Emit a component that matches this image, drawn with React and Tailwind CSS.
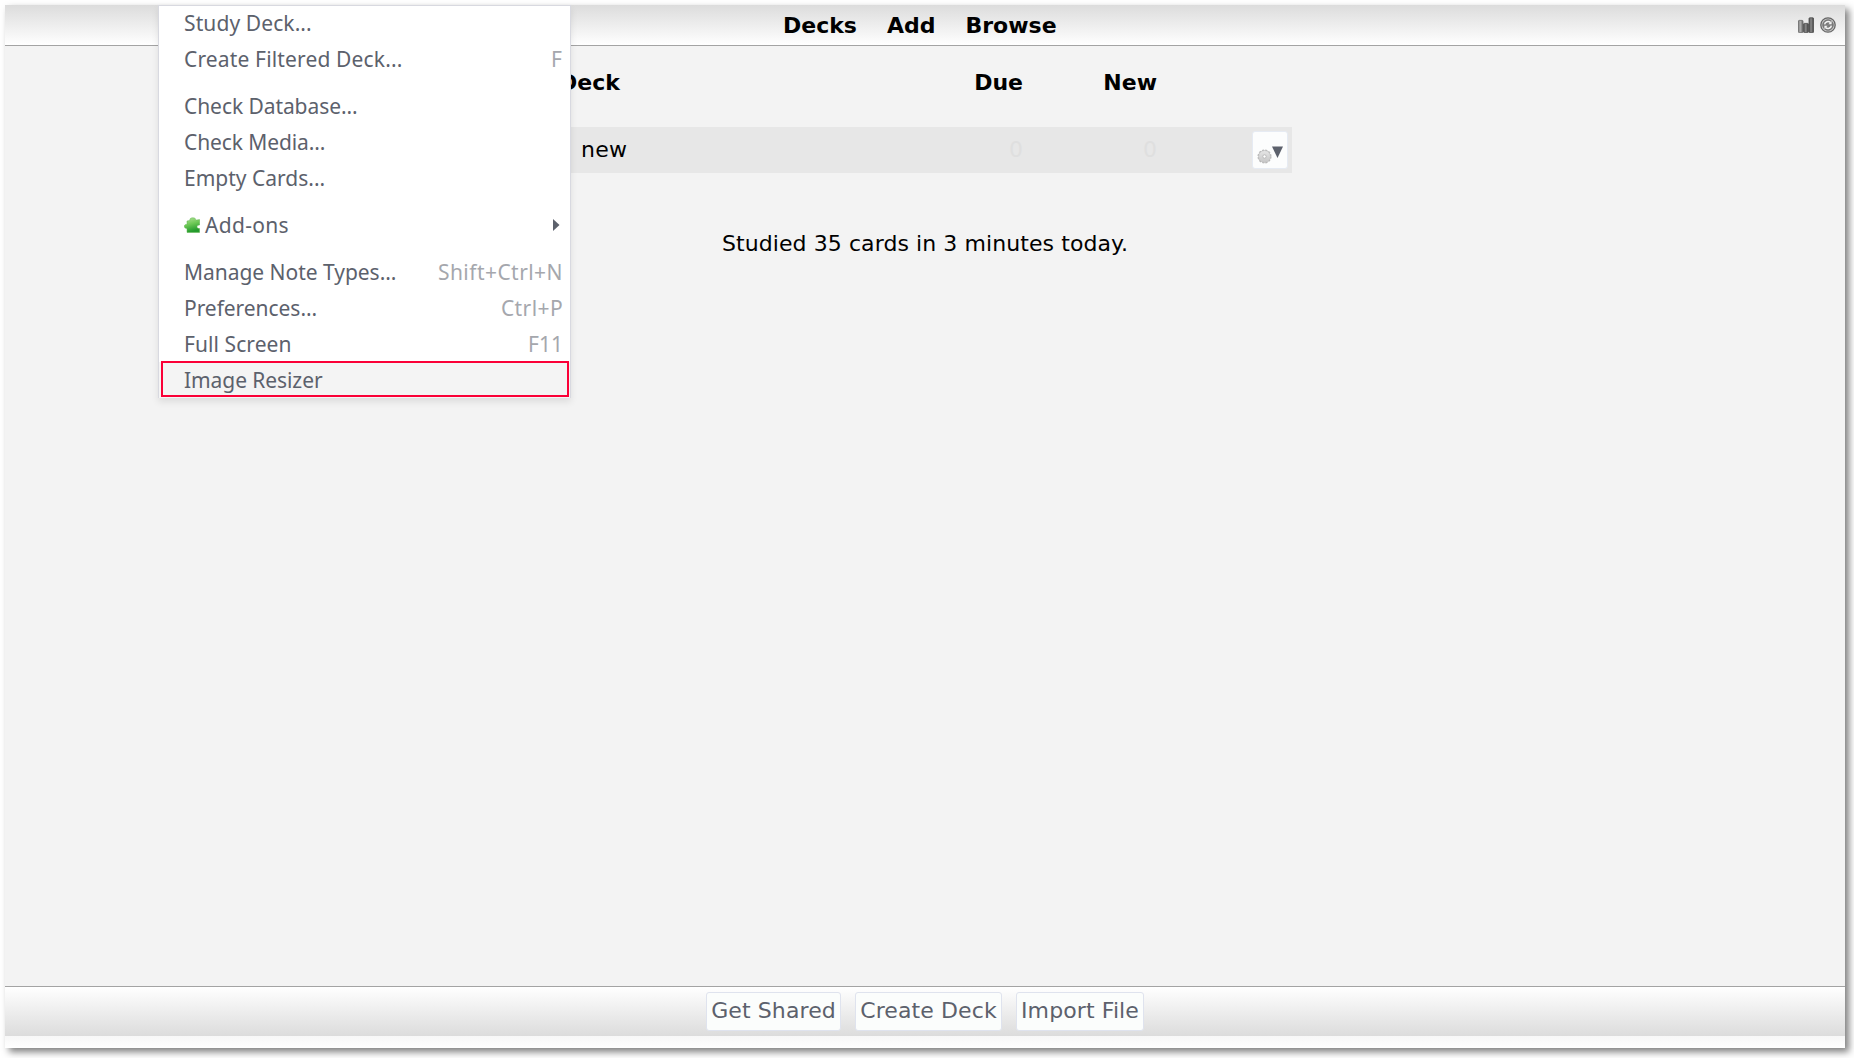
function StatsIcon() {
  return (
    <svg width="16" height="16" viewBox="0 0 16 16" className="block">
      <defs>
        <linearGradient id="bar" x1="0" x2="1" y1="0" y2="0">
          <stop offset="0" stopColor="#777" />
          <stop offset="0.4" stopColor="#b2b2b2" />
          <stop offset="1" stopColor="#686868" />
        </linearGradient>
        <linearGradient id="barDark" x1="0" x2="1" y1="0" y2="0">
          <stop offset="0" stopColor="#4d4d4d" />
          <stop offset="0.45" stopColor="#8a8a8a" />
          <stop offset="1" stopColor="#3c3c3c" />
        </linearGradient>
      </defs>
      <rect x="0.4" y="3.4" width="4.6" height="12.2" rx="0.8" fill="url(#bar)" stroke="#666" strokeWidth="0.8" />
      <rect x="5.6" y="6.4" width="4.8" height="9.2" rx="0.8" fill="url(#barDark)" stroke="#4a4a4a" strokeWidth="0.8" />
      <rect x="11" y="0.8" width="4.6" height="14.8" rx="0.8" fill="url(#barDark)" stroke="#4a4a4a" strokeWidth="0.8" />
    </svg>
  );
}

function SyncIcon() {
  return (
    <svg width="16" height="16" viewBox="0 0 16 16" className="block">
      <circle cx="8" cy="8" r="7.2" fill="#c9c9c9" stroke="#666" strokeWidth="1.3" />
      <circle cx="8" cy="8" r="5.3" fill="#7c7c7c" stroke="#6e6e6e" strokeWidth="0.8" />
      <path d="M4.6 7.4 A3.5 3.5 0 0 1 10.4 5.4 M11.4 8.6 A3.5 3.5 0 0 1 5.6 10.6" fill="none" stroke="#f4f4f4" strokeWidth="1.5" />
      <path d="M11.6 3.9 V7.2 H8.4 Z M4.4 12.1 V8.8 H7.6 Z" fill="#f4f4f4" />
    </svg>
  );
}

function GearIcon() {
  return (
    <svg width="15" height="15" viewBox="0 0 15 15" className="block">
      <defs>
        <linearGradient id="gear" x1="0" x2="0" y1="0" y2="1">
          <stop offset="0" stopColor="#e6e6e6" />
          <stop offset="1" stopColor="#c6c6c6" />
        </linearGradient>
      </defs>
      <circle cx="7.5" cy="7.5" r="6.3" fill="none" stroke="#b5b5b5" strokeWidth="1.4" strokeDasharray="2.1 1.2" />
      <circle cx="7.5" cy="7.5" r="6" fill="url(#gear)" stroke="#bdbdbd" strokeWidth="0.7" />
      <circle cx="7.5" cy="7.5" r="1.7" fill="#fff" stroke="#b0b0b0" strokeWidth="0.8" />
    </svg>
  );
}

function PuzzleIcon() {
  return (
    <svg width="16" height="16" viewBox="0 0 16 16" className="block">
      <defs>
        <linearGradient id="puzzle" x1="0" x2="0.3" y1="0" y2="1">
          <stop offset="0" stopColor="#b4e39a" />
          <stop offset="0.5" stopColor="#6fc957" />
          <stop offset="1" stopColor="#229a2c" />
        </linearGradient>
      </defs>
      <path
        d="M3 4 L6 3.4 C5.4 1.8 6.7 0.8 8.8 0.8 C10.9 0.8 12.2 1.8 11.4 3.2 L15.6 2.6 V8 C14.2 7.8 13 8.6 13 9.8 C13 11 14.2 11.7 15.6 11.5 V15.4 H3 V11.4 C1.4 11.5 0.2 10.6 0.2 9.3 C0.2 8 1.6 7.1 3 7.5 Z"
        fill="url(#puzzle)"
        stroke="#5fb44c"
        strokeWidth="0.5"
      />
    </svg>
  );
}

const groups = [
  [
    { label: "Study Deck...", cls: "tracking-[0.1px]" },
    { label: "Create Filtered Deck...", cls: "tracking-[0.15px]", keys: "F", keyCls: "mr-px" },
  ],
  [
    { label: "Check Database...", cls: "tracking-[-0.07px]" },
    { label: "Check Media...", cls: "tracking-[-0.1px]" },
    { label: "Empty Cards...", cls: "" },
  ],
  [{ label: "Add-ons", cls: "tracking-[0.3px]", submenu: true }],
  [
    { label: "Manage Note Types...", cls: "tracking-[-0.03px]", keys: "Shift+Ctrl+N", keyCls: "tracking-[0.45px]" },
    { label: "Preferences...", cls: "tracking-[-0.05px]", keys: "Ctrl+P", keyCls: "tracking-[0.4px]" },
    { label: "Full Screen", cls: "tracking-[0.08px]", keys: "F11", keyCls: "" },
    { label: "Image Resizer", cls: "tracking-[-0.08px]", active: true },
  ],
];

function MenuItem({ item }) {
  return (
    <div className={"flex h-9 items-center pr-[7px] pl-[25px] " + (item.active ? "relative bg-[#f4f4f4]" : "")}>
      {item.submenu && (
        <span className="mr-[5px]">
          <PuzzleIcon />
        </span>
      )}
      <span className={item.cls}>{item.label}</span>
      {item.keys && <span className={"ml-auto text-[#a5a7ad] " + item.keyCls}>{item.keys}</span>}
      {item.submenu && (
        <svg width="7" height="12" viewBox="0 0 7 12" className="mr-[3px] ml-auto block">
          <path d="M0 0 L6.5 6 L0 12 Z" fill="#5c616c" />
        </svg>
      )}
      {item.active && <div className="absolute -top-px right-px bottom-px left-[2px] border-2 border-[#fb0037]" />}
    </div>
  );
}

function ToolsMenu() {
  return (
    <div className="absolute top-0 left-[153px] h-[393px] w-[413px] border border-[#d8d9e0] bg-white font-['Noto_Sans',sans-serif] text-[21px] leading-9 whitespace-nowrap text-[#5c616c] shadow-[0_4px_7px_rgba(0,0,0,0.09)]">
      <div className="-mt-px flex flex-col gap-[11px]">
        {groups.map((group, i) => (
          <div key={i}>
            {group.map((item) => (
              <MenuItem key={item.label} item={item} />
            ))}
          </div>
        ))}
      </div>
    </div>
  );
}

function BottomButton({ children, width }) {
  return (
    <button className={"h-[39px] rounded-[3px] border border-[#dfe3ee] bg-[#fbfdfc] leading-[36px] pb-px tracking-[0.1px] text-[#5c616c] " + width}>
      {children}
    </button>
  );
}

export default function App() {
  return (
    <div className="h-[1058px] w-[1854px] overflow-hidden bg-white pt-[5px] pl-[5px] font-['DejaVu_Sans',sans-serif] text-[22px] leading-10 text-black">
      <div className="relative flex h-[1043px] w-[1840px] flex-col bg-[#f3f3f3] shadow-[4px_4px_7px_rgba(0,0,0,0.5)]">
        <header className="flex h-[41px] shrink-0 items-center border-b border-[#a3a3a3] bg-linear-to-b from-[#dcdcdc] to-white pr-[9px] pl-[778px] font-bold">
          <nav className="flex gap-[30px] pt-[2px]">
            <span>Decks</span>
            <span>Add</span>
            <span>Browse</span>
          </nav>
          <div className="ml-auto flex gap-[6px]">
            <StatsIcon />
            <SyncIcon />
          </div>
        </header>

        <main className="flex flex-1 flex-col items-center">
          <div className="w-[734px]">
            <div className="grid h-[81px] grid-cols-[465px_134px_135px] pt-[17px] font-bold">
              <div className="flex justify-between pl-px">
                <span>Deck</span>
                <span>Due</span>
              </div>
              <span className="text-right">New</span>
            </div>
            <div className="grid h-[46px] grid-cols-[465px_134px_135px] items-center bg-[#e7e7e7]">
              <div className="flex justify-between pl-[23px]">
                <span className="tracking-[0.2px]">new</span>
                <span className="text-[#dfdfdf]">0</span>
              </div>
              <span className="text-right text-[#dfdfdf]">0</span>
              <button className="mr-[4px] mb-px flex h-[38px] w-[36px] items-start justify-self-end rounded-[3px] border border-[#e6ebf3] bg-[#fcfdfd] pt-[14px] pl-[4px]">
                <span className="mt-[3px]">
                  <GearIcon />
                </span>
                <svg width="11" height="12" viewBox="0 0 11 12" className="block">
                  <path d="M0 0.5 H11 L5.5 12 Z" fill="#5c616c" />
                </svg>
              </button>
            </div>
          </div>
          <p className="mt-[51px] tracking-[0.08px]">Studied 35 cards in 3 minutes today.</p>
        </main>

        <footer className="flex h-[50px] shrink-0 items-start justify-center gap-[14px] border-t border-[#a3a3a3] bg-linear-to-b from-white to-[#dcdcdc] pt-[5px]">
          <BottomButton width="w-[135px]">Get Shared</BottomButton>
          <BottomButton width="w-[147px]">Create Deck</BottomButton>
          <BottomButton width="w-[128px]">Import File</BottomButton>
        </footer>
        <div className="h-3 shrink-0 bg-linear-to-b from-[#f7f7f7] to-white" />

        <ToolsMenu />
      </div>
    </div>
  );
}
